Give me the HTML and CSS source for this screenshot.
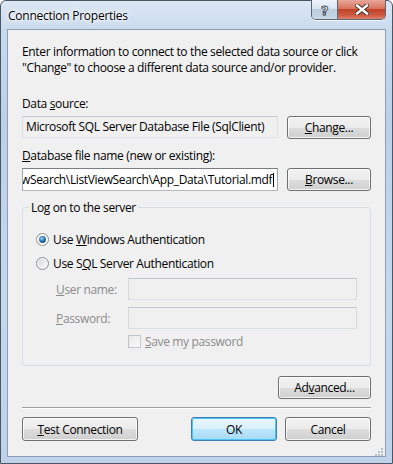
FILE: index.html
```html
<!DOCTYPE html>
<html lang="en">
<head>
<meta charset="UTF-8">
<meta name="viewport" content="width=device-width, initial-scale=1.0">
<title>Connection Properties</title>
<link rel="stylesheet" href="styles.css">
</head>
<body>
    <div id="window">
        <div id="titlebar">
            <span id="title">Connection Properties</span>
            <div id="captionButtons">
                <div class="cap help">?</div>
                <div class="cap close">
                    <svg width="14" height="11" viewBox="0 0 14 11">
                        <path d="M2 1.5 L12 9.5 M12 1.5 L2 9.5" stroke="#3a2a28" stroke-width="4.2" stroke-linecap="square"/>
                        <path d="M2 1.5 L12 9.5 M12 1.5 L2 9.5" stroke="#fff" stroke-width="2.4" stroke-linecap="square"/>
                    </svg>
                </div>
            </div>
        </div>
        <div id="client">
            <p id="intro">Enter information to connect to the selected data source or click<br>"Change" to choose a different data source and/or provider.</p>

            <div class="label first">Data <u>s</u>ource:</div>
            <div class="row">
                <div class="textbox readonly">Microsoft SQL Server Database File (SqlClient)</div>
                <button class="btn side"><u>C</u>hange...</button>
            </div>

            <div class="label"><u>D</u>atabase file name (new or existing):</div>
            <div class="row">
                <div class="textbox active"><span class="scrolled">wSearch\ListViewSearch\App_Data\Tutorial.mdf</span><span class="caret"></span></div>
                <button class="btn side"><u>B</u>rowse...</button>
            </div>

            <fieldset id="logon">
                <legend>Log on to the server</legend>
                <div class="groupBody">
                    <div class="radioRow">
                        <svg class="radio" width="13" height="13" viewBox="0 0 13 13">
                            <defs>
                                <radialGradient id="dot" cx="0.4" cy="0.35" r="0.7">
                                    <stop offset="0" stop-color="#a9dcf7"/>
                                    <stop offset="0.5" stop-color="#2f82bd"/>
                                    <stop offset="1" stop-color="#0c3f6c"/>
                                </radialGradient>
                            </defs>
                            <circle cx="6.5" cy="6.5" r="6" fill="#f4f4f4" stroke="#8a8f95"/>
                            <circle cx="6.5" cy="6.5" r="4.6" fill="none" stroke="#fff"/>
                            <circle cx="6.5" cy="6.5" r="3.4" fill="url(#dot)"/>
                        </svg>
                        <span>Use <u>W</u>indows Authentication</span>
                    </div>
                    <div class="radioRow">
                        <svg class="radio" width="13" height="13" viewBox="0 0 13 13">
                            <defs>
                                <linearGradient id="well" x1="0" y1="0" x2="1" y2="1">
                                    <stop offset="0" stop-color="#d9d9d9"/>
                                    <stop offset="1" stop-color="#fafafa"/>
                                </linearGradient>
                            </defs>
                            <circle cx="6.5" cy="6.5" r="6" fill="#f4f4f4" stroke="#8a8f95"/>
                            <circle cx="6.5" cy="6.5" r="4.4" fill="url(#well)"/>
                        </svg>
                        <span>Use S<u>Q</u>L Server Authentication</span>
                    </div>
                    <div id="credentials">
                        <span class="dim"><u>U</u>ser name:</span>
                        <div class="textbox disabled"></div>
                        <span class="dim"><u>P</u>assword:</span>
                        <div class="textbox disabled"></div>
                    </div>
                    <div id="saveRow">
                        <span class="checkbox"></span>
                        <span class="dim"><u>S</u>ave my password</span>
                    </div>
                </div>
            </fieldset>

            <div id="advancedRow">
                <button class="btn advanced">Ad<u>v</u>anced...</button>
            </div>
            <div class="separator"></div>
            <div id="footer">
                <button class="btn test"><u>T</u>est Connection</button>
                <div class="spacer"></div>
                <button class="btn ok default">OK</button>
                <button class="btn cancel">Cancel</button>
            </div>
            <svg id="grip" width="9" height="9" viewBox="0 0 9 9">
                <g fill="#b8c0c8">
                    <rect x="7" y="1" width="2" height="2"/>
                    <rect x="4" y="4" width="2" height="2"/><rect x="7" y="4" width="2" height="2"/>
                    <rect x="1" y="7" width="2" height="2"/><rect x="4" y="7" width="2" height="2"/><rect x="7" y="7" width="2" height="2"/>
                </g>
            </svg>
        </div>
    </div>
</body>
</html>
```

FILE: styles.css
```css
* {
    box-sizing: border-box;
}
body {
    margin: 0;
    font-family: "Segoe UI", "Open Sans", sans-serif;
    font-size: 12px;
    letter-spacing: -0.35px;
    color: #000;
}
#window {
    width: 393px;
    height: 464px;
    border: 1px solid #4b5664;
    border-radius: 6px 6px 0 0;
    background: linear-gradient(180deg, #dce7f4 0px, #c9daee 30px, #bcd0e8 120px, #c6d8ec 300px, #bfd2e9 464px);
    padding: 0 6px 6px;
    display: flex;
    flex-direction: column;
}
#titlebar {
    height: 28px;
    display: flex;
    justify-content: space-between;
    align-items: flex-start;
}
#title {
    padding: 7px 0 0 1px;
    line-height: 15px;
    letter-spacing: -0.25px;
    text-shadow: 0 0 8px #fff, 0 0 4px #fff, 0 0 2px #fff;
}
#captionButtons {
    display: flex;
    margin-top: -1px;
    border: 1px solid #5b6573;
    border-top: none;
    border-radius: 0 0 5px 5px;
    overflow: hidden;
    box-shadow: 0 1px 0 rgba(255,255,255,0.7);
}
.cap {
    height: 19px;
    display: flex;
    align-items: center;
    justify-content: center;
}
.help {
    width: 26px;
    border-right: 1px solid #5b6573;
    background: linear-gradient(180deg, #eef3f9 0%, #d9e4f0 45%, #bccddf 50%, #c9d7e6 100%);
    font-family: "DejaVu Sans", sans-serif;
    font-weight: bold;
    font-size: 13px;
    color: #fff;
    -webkit-text-stroke: 0.9px #3b4550;
    padding-top: 1px;
}
.close {
    width: 47px;
    background: linear-gradient(180deg, #e9a899 0%, #d9725d 45%, #c4432b 50%, #cd5a43 80%, #de826c 100%);
}
#client {
    flex: 1;
    border: 1px solid #8c9fb6;
    background: #f0f0f0;
    padding: 14px 14px 0;
    display: flex;
    flex-direction: column;
}
#intro {
    margin: 0;
    line-height: 16px;
}
.label {
    line-height: 15px;
    margin-top: 9px;
}
.label.first {
    margin-top: 20px;
}
.row {
    display: flex;
    justify-content: space-between;
    align-items: flex-start;
    margin-top: 5px;
}
.textbox {
    height: 22px;
    line-height: 20px;
    padding: 0 3px;
    border: 1px solid #abadb3;
    border-color: #abadb3 #dbdfe6 #e3e9ef #e2e3ea;
    white-space: nowrap;
    overflow: hidden;
}
.row .textbox {
    width: 256px;
}
.textbox.readonly {
    background: #f0f0f0;
    border-color: #c5c8cc #dcdfe3 #e0e3e7 #dcdfe3;
}
.textbox.active {
    background: #fff;
    height: 23px;
    line-height: 21px;
    border-color: #7a7e84 #a5a9ae #b5b9be #a5a9ae;
    padding-left: 0;
}
.scrolled {
    margin-left: -2px;
}
.caret {
    display: inline-block;
    width: 1px;
    height: 14px;
    background: #000;
    vertical-align: -3px;
    margin-left: 1px;
}
.textbox.disabled {
    background: #f0f0f0;
    border-color: #c2c5c9 #d5d8dc #dcdfe3 #d5d8dc;
}
.btn {
    font-family: inherit;
    font-size: 12px;
    letter-spacing: -0.35px;
    color: #000;
    height: 23px;
    padding: 0;
    border: 1px solid #707070;
    border-radius: 3px;
    background: linear-gradient(180deg, #f2f2f2 0%, #ebebeb 50%, #dddddd 51%, #cfcfcf 100%);
    box-shadow: inset 0 0 0 1px rgba(255,255,255,0.75);
}
.btn.side {
    width: 84px;
}
#logon {
    margin: 9px 0 0;
    padding: 0;
    min-width: 0;
    border: 1px solid #d5dfe5;
    border-radius: 3px;
}
#logon legend {
    margin-left: 6px;
    padding: 0 2px;
    line-height: 15px;
}
.groupBody {
    padding: 12px 13px 16px;
}
.radioRow {
    height: 24px;
    display: flex;
    align-items: center;
    gap: 4px;
}
.radio {
    display: block;
}
#credentials {
    margin: 3px 0 0 20px;
    display: grid;
    grid-template-columns: 72px 1fr;
    row-gap: 7px;
    align-items: center;
}
.dim {
    color: #8b8b8b;
}
#saveRow {
    margin: 5px 0 0 92px;
    height: 15px;
    display: flex;
    align-items: center;
    gap: 4px;
}
.checkbox {
    width: 13px;
    height: 13px;
    border: 1px solid #c3c6ca;
    background: linear-gradient(135deg, #e9e9e9, #fafafa);
}
#advancedRow {
    display: flex;
    justify-content: flex-end;
    margin-top: 10px;
}
.btn.advanced {
    width: 93px;
}
.separator {
    margin-top: 8px;
    border-top: 1px solid #a0a0a0;
    border-bottom: 1px solid #fff;
}
#footer {
    display: flex;
    margin-top: 8px;
    gap: 8px;
}
#footer .btn {
    height: 24px;
}
.spacer {
    flex: 1;
}
.btn.test {
    width: 116px;
}
.btn.ok {
    width: 86px;
}
.btn.cancel {
    width: 86px;
}
.btn.default {
    border-color: #3c7fb1;
    box-shadow: inset 0 0 0 1px #48c6f8;
    background: linear-gradient(180deg, #eaf6fd 0%, #d9f0fc 50%, #bee6fd 51%, #a7d9f5 100%);
}
#grip {
    display: block;
    align-self: flex-end;
    margin: 6px -12px 0 0;
}
```
